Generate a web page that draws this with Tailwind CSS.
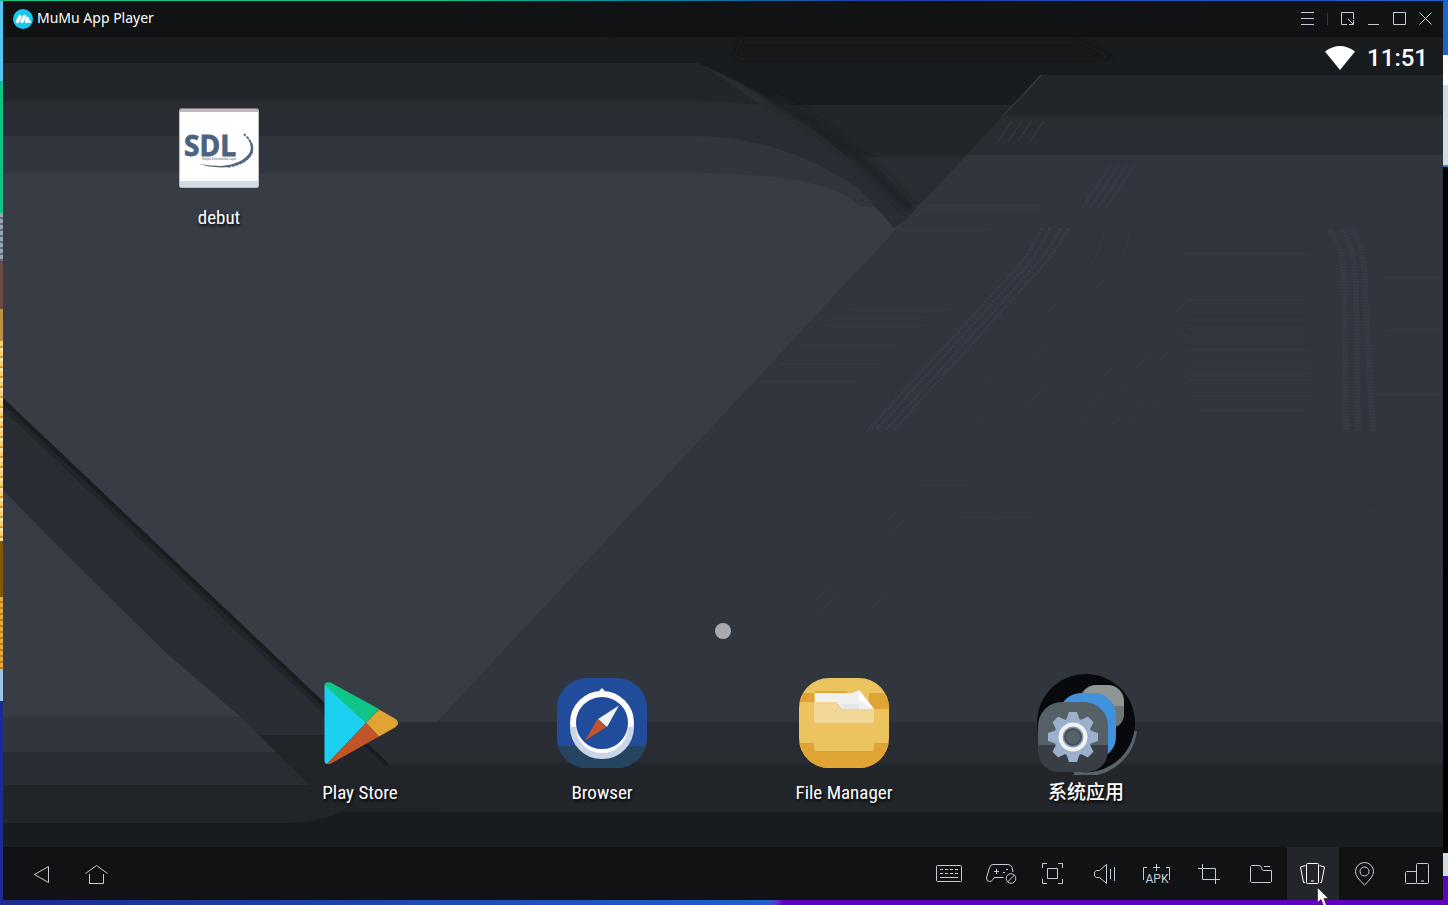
<!DOCTYPE html>
<html lang="en">
<head>
    <meta charset="UTF-8">
    <meta name="viewport" content="width=device-width, initial-scale=1.0">
    <title>MuMu App Player</title>
    <script src="https://cdn.jsdelivr.net/npm/@tailwindcss/browser@4"></script>
</head>
<body class="h-screen overflow-hidden grid grid-cols-[3px_1fr_5px] grid-rows-[1px_1fr_5px] bg-[#1d2a92] font-['Roboto_Condensed','Roboto','Noto_Sans_CJK_SC',sans-serif]">
    <!-- Desktop visible around the window -->
    <div class="col-span-3 bg-linear-to-r from-[#10c488] from-30% via-[#1f3fa8] via-60% to-[#1c62d0]"></div>
    <div class="flex flex-col">
        <div class="h-20 bg-[#56c4ee]"></div>
        <div class="h-33 bg-[#10c488]"></div>
        <div class="h-12 bg-[repeating-linear-gradient(#9aa4ae_0_4px,#5d6c78_4px_6px)]"></div>
        <div class="h-12 bg-[#6b4a44]"></div>
        <div class="h-8 bg-[#c09040]"></div>
        <div class="h-50 bg-[repeating-linear-gradient(#f3cf79_0_5px,#d99a2c_5px_7px,#fbe3a4_7px_10px)]"></div>
        <div class="h-14 bg-[#855800]"></div>
        <div class="h-18 bg-[repeating-linear-gradient(#e8a83c_0_4px,#b97b1c_4px_6px)]"></div>
        <div class="h-8 bg-[#9cc4e0]"></div>
        <div class="flex-1 bg-[#1d2a92]"></div>
    </div>

    <div class="flex flex-col min-w-0">
        <!-- Title bar -->
        <header class="h-9 bg-[#101214] text-[#c5cbd6] flex items-center pl-[10px] pr-[5px]">
            <svg class="size-5" viewBox="0 0 20 20">
                <circle cx="10" cy="10" r="10" fill="#18c8ea"/>
                <path d="M4.500 12.500 7 7.500M9 12.500l2.500-5M13.500 12.500l1-3" stroke="#fff" stroke-width="3.400" stroke-linecap="round"/>
                <circle cx="16.500" cy="12.500" r="1.500" fill="#fff"/>
            </svg>
            <h1 class="ml-1 pb-0.5 text-sm text-white font-['Noto_Sans',sans-serif]">MuMu App Player</h1>
            <div class="ml-auto flex items-center">
                <button class="w-[26px] h-9 flex items-center justify-center" aria-label="Menu">
                    <svg class="size-4" viewBox="0 0 16 16" fill="none" stroke="currentColor"><path d="M2 1.500h13M2 7.500h13M2 13.500h13"/></svg>
                </button>
                <span class="w-[14px] flex justify-center"><span class="w-px h-3 bg-[#3a3d42]"></span></span>
                <button class="w-[26px] h-9 flex items-center justify-center" aria-label="Mini mode">
                    <svg class="size-4" viewBox="0 0 16 16" fill="none" stroke="currentColor"><path d="M8 13.500H2.500v-12h12V8M9 8l5.500 5.500M10 13.500h4.500V9"/></svg>
                </button>
                <button class="w-[26px] h-9 flex items-center justify-center" aria-label="Minimize">
                    <svg class="size-4" viewBox="0 0 16 16" fill="none" stroke="currentColor"><path d="M3 13.500h11"/></svg>
                </button>
                <button class="w-[26px] h-9 flex items-center justify-center" aria-label="Maximize">
                    <svg class="size-4" viewBox="0 0 16 16" fill="none" stroke="currentColor"><path d="M2.500 1.500h12v12h-12z"/></svg>
                </button>
                <button class="w-[26px] h-9 flex items-center justify-center" aria-label="Close">
                    <svg class="size-4" viewBox="0 0 16 16" fill="none" stroke="currentColor"><path d="m2.500 1.500 12 12M14.500 1.500l-12 12"/></svg>
                </button>
            </div>
        </header>

        <!-- Android home screen -->
        <main class="relative isolate flex-1 min-h-0 flex flex-col text-white">
            <svg class="absolute inset-0 -z-10 size-full" viewBox="3 37 1440 810" preserveAspectRatio="none" aria-hidden="true">
                <defs>
                    <clipPath id="wedge"><path d="M600 37h560v40l-120-2-130 141C868 178 805 104 690 60z"/></clipPath>
                    <clipPath id="panel"><path d="M1443 37v686H436L890 236 1085 30z"/></clipPath>
                    <clipPath id="stripe"><path d="M3 398 390 765 480 847H370L300 775 235 712 165 652 60 548 3 490z"/></clipPath>
                    <filter id="soft" x="-20%" y="-20%" width="140%" height="140%"><feGaussianBlur stdDeviation="3"/></filter>
                </defs>
                <path fill="#383c44" d="M3 37h1440v810H3z"/>
                <path fill="#31353e" d="M3 37h1000v170H860q-30-34-170-34H3z"/>
                <path fill="#292d33" d="M3 37h1000v160H870q-80-61-180-61H3z"/>
                <path fill="#222529" d="M3 37h1000v70H780q-50-6-90-6H3z"/>
                <path fill="#181c1f" d="M3 37h1000v26H3z"/>
                <path fill="#31353e" d="M3 717h340v130H3z"/>
                <path fill="#292d33" d="M3 752h340v95H3z"/>
                <path fill="#212428" d="M3 785h340v62H3z"/>
                <!-- dark fold at the top -->
                <path d="M700 63Q825 125 910 218l-16 10Q840 165 790 125z" fill="#292d33"/>
                <g clip-path="url(#wedge)">
                    <path fill="#292d33" d="M600 37h600v200H600z"/>
                    <path fill="#222529" d="M600 37h600v120H600z"/>
                    <path fill="#181c1f" d="M600 37h600v68H600z"/>
                </g>
                <path d="M770 98Q850 140 910 210" fill="none" stroke="#1f2226" stroke-width="9" filter="url(#soft)"/>
                <!-- right panel -->
                <g clip-path="url(#panel)">
                    <path fill="#31353e" d="M300 155h1143v570H300z"/>
                    <path fill="#292d33" d="M900 115h543v40H900z"/>
                    <path fill="#222529" d="M900 75h543v40H900z"/>
                    <path fill="#181c1f" d="M900 37h543v38H900z"/>
                </g>
                <path fill="#292d33" d="M330 722h1113v125H330z"/>
                <path fill="#222529" d="M330 763h1113v84H330z"/>
                <path fill="#121517" opacity=".8" d="M742 39h330l40 19H735z" filter="url(#soft)"/>
                <!-- left stripe -->
                <g clip-path="url(#stripe)">
                    <path fill="#292d33" d="M3 380h500v467H3z"/>
                    <path fill="#212428" d="M3 735h500v112H3z"/>
                    <path d="M3 400 390 767" stroke="#222529" stroke-width="14"/>
                    <path d="M3 400 388 765" stroke="#1a1d20" stroke-width="5"/>
                </g>
                <path fill="#191c1f" d="M3 823h285q30 0 52-11h1103v35H3z"/>
                <!-- faint circuit lines -->
                <g fill="none" stroke="#383c45">
                    <path d="M1042 228Q1032 250 1015 270L868 430M1050 228Q1040 250 1023 270L876 430M1060 228Q1050 250 1031 270L886 430M1068 228Q1058 250 1039 270L894 430" stroke-width="3" stroke-dasharray="3 1"/>
                    <path d="M1330 230q15 20 14 60l2 140M1342 230q14 20 14 60l2 140M1352 230q14 20 13 60l8 140" stroke-width="6" stroke-dasharray="2 1"/>
                    <path d="m1110 166-28 42M1118 166l-28 42M1126 166l-28 42M1134 166l-28 42" stroke-dasharray="2 1" stroke-width="3"/>
                    <path d="m1012 121-14 20M1022 121l-14 20M1032 121l-14 20M1044 121l-14 20"/>
                    <path d="M1185 254h123M1187 300h120M1187 320h118M1187 329h118M1187 337h118M1187 350h122M1190 367h120M1190 373h120M1190 380h120M1190 396h120M1200 410h107"/>
                    <path d="M1104 232q-4 25-20 40L945 430M1130 232q-4 25-20 40L972 430M1185 254 1000 430M1187 302 1043 430M1187 325 1060 430M1187 337 1072 430M1190 370 1103 430M1190 380l-72 50" stroke-dasharray="3 1"/>
                    <path d="M915 206h125M915 211h125M890 229h100M850 309h100M830 317h95M825 325h100M800 347h100M780 364h100M760 382h95M1385 278h58M1385 331h58M1375 394h68"/>
                    <path d="M920 485 790 630M930 490 800 635M960 517 860 620M920 485h53M960 517h75" stroke-dasharray="3 1"/>
                    <path d="M965 490l150 160M980 490l150 160M1030 480l160 170M1060 480l160 170M1120 490l150 150M1160 490l150 150M1240 520l110 110M1280 490l163 80M1300 480l143 60" stroke-dasharray="2 2"/>
                </g>
            </svg>

            <div class="h-[42px] flex items-center justify-end gap-3 pr-[15px]">
                <svg class="w-[30px] h-6" viewBox="0 0 30 24" role="img" aria-label="Wi-Fi"><path d="M0 5.500Q15-5.500 30 5.500L15 24z" fill="#fff"/></svg>
                <time class="text-2xl font-medium font-['Roboto',sans-serif]">11:51</time>
            </div>

            <div class="flex-1 grid grid-cols-4 px-12 pt-[29px] content-start">
                <a href="#" class="flex flex-col items-center gap-4">
                    <svg class="size-20" viewBox="0 0 80 80">
                        <rect width="80" height="80" rx="3" fill="#8f7a7c"/>
                        <rect y="1" width="80" height="79" rx="3" fill="#b9bcc2"/>
                        <path d="M1 4h78v75H1z" fill="#fff"/>
                        <path d="M1 73h78v6H1z" fill="#d3dce4"/>
                        <text x="5" y="48" font-family="Open Sans" font-size="28" font-weight="700" fill="#4a637f" stroke="#4a637f" stroke-width=".8">SDL</text>
                        <text x="23" y="52" font-family="Liberation Sans" font-size="3" fill="#4a637f">Simple Directmedia Layer</text>
                        <path d="M65 26Q76 34 74 44 68 59 42 59.500 29 59 20 56 32 58 42 58 64 56 71 44 74 35 65 26z" fill="#56687c"/>
                        <path d="M65 26q10 9 8 18-5 12-25 15" fill="none" stroke="#56687c" stroke-width="2" stroke-dasharray="2 2"/>
                    </svg>
                    <span class="text-[19px] leading-7 [text-shadow:1px_2px_3px_#000]">debut</span>
                </a>
            </div>

            <span class="size-4 rounded-full bg-[#a9aaae] mx-auto mb-8"></span>

            <nav class="w-full max-w-[968px] mx-auto grid grid-cols-4 pb-10 text-[19px] leading-7 [text-shadow:1px_2px_3px_#000]" aria-label="Dock">
                <a href="#" class="flex flex-col items-center gap-1">
                    <svg class="size-26" viewBox="0 0 104 104">
                        <path d="M16.500 15q0-5 6-3.500L71 38 58 52z" fill="#0fc688"/>
                        <path d="M16.500 14 58 52 19 93q-2.500 0-2.500-4z" fill="#1bd0f0"/>
                        <path d="M71 38.500 86 47q8 5 0 10L71 65.500 58 52z" fill="#e0a434"/>
                        <path d="M58 52 71 65.500 24 92q-3 1.500-5 1z" fill="#bf5529"/>
                    </svg>
                    <span>Play Store</span>
                </a>
                <a href="#" class="flex flex-col items-center gap-1">
                    <svg class="size-26" viewBox="0 0 104 104">
                        <defs><clipPath id="browser"><rect x="7" y="7" width="90" height="90" rx="30"/></clipPath></defs>
                        <g clip-path="url(#browser)">
                            <path d="M0 0h104v104H0z" fill="#214c9b"/>
                            <path d="M0 75h104v29H0z" fill="#254460"/>
                        </g>
                        <circle cx="52" cy="52" r="29" fill="#214c9b" stroke="#fff" stroke-width="6"/>
                        <path d="M23 56a29 29 0 0 0 58 0" fill="none" stroke="#c8d6e8" stroke-width="6"/>
                        <path d="m49 20 3-3 3 3z" fill="#fff"/>
                        <path d="M69 34.500 57 56l-9-8z" fill="#f2f2f2"/>
                        <path d="M35 69.500 47.500 48l9 8z" fill="#bf5529"/>
                    </svg>
                    <span>Browser</span>
                </a>
                <a href="#" class="flex flex-col items-center gap-1">
                    <svg class="size-26" viewBox="0 0 104 104">
                        <defs><clipPath id="files"><rect x="7" y="7" width="90" height="90" rx="30"/></clipPath></defs>
                        <g clip-path="url(#files)">
                            <path d="M0 0h104v104H0z" fill="#ebc35f"/>
                            <path d="M0 22h22v9H0zM78 22h26v16H82q-8-8-4-16zM0 72h22v5q0 3 3 3h54q3 0 3-3v-5h22v32H0z" fill="#e0a434"/>
                        </g>
                        <path d="M23 20h32v2H23z" fill="#e0a434"/>
                        <path d="M23 22h37l7-3 15 19H50l-6-7H23z" fill="#f0f0ee"/>
                        <path d="M49 33h18v5H51z" fill="#e4e6e8"/>
                        <path d="M67 19v10l15 9z" fill="#fff"/>
                        <path d="M22 31h22l3 5q1 2 4 2h31v12q0 2-2 2H24q-2 0-2-2z" fill="#f0d795"/>
                    </svg>
                    <span>File Manager</span>
                </a>
                <a href="#" class="flex flex-col items-center gap-1">
                    <svg class="size-26" viewBox="0 0 104 104">
                        <path d="M101 60A50 50 0 0 1 40 102" fill="none" stroke="#59616a" stroke-width="4"/>
                        <circle cx="52" cy="52" r="49" fill="#08090c"/>
                        <rect x="46" y="14" width="44" height="43" rx="16" fill="#8f9593"/>
                        <path d="M46 35h44v7q0 15-16 15H46z" fill="#6c7778"/>
                        <rect x="25" y="22" width="57" height="66" rx="22" fill="#4291dc"/>
                        <rect x="4" y="31" width="70" height="70" rx="24" fill="#556067"/>
                        <path d="M4 74h70v3q0 24-24 24H28Q4 101 4 77z" fill="#393d45"/>
                        <g transform="translate(39 66)">
                            <g fill="#9bb0cd">
                                <circle r="19"/>
                                <path d="M-7-16-4-25h8l3 9z"/>
                                <path d="M-7-16-4-25h8l3 9z" transform="rotate(45)"/>
                                <path d="M-7-16-4-25h8l3 9z" transform="rotate(90)"/>
                                <path d="M-7-16-4-25h8l3 9z" transform="rotate(135)"/>
                                <path d="M-7-16-4-25h8l3 9z" transform="rotate(180)"/>
                                <path d="M-7-16-4-25h8l3 9z" transform="rotate(225)"/>
                                <path d="M-7-16-4-25h8l3 9z" transform="rotate(270)"/>
                                <path d="M-7-16-4-25h8l3 9z" transform="rotate(315)"/>
                            </g>
                            <circle r="12.500" fill="#8699b2" stroke="#f2f2f0" stroke-width="4"/>
                            <circle r="8" fill="#556067" stroke="#414c5a" stroke-width="2"/>
                        </g>
                    </svg>
                    <span lang="zh" class="font-medium">系统应用</span>
                </a>
            </nav>
        </main>

        <!-- Toolbar -->
        <footer class="h-[53px] bg-[#101214] text-[#c5cbd6] flex pl-[11px]">
            <button class="w-[55px] flex items-center justify-center" aria-label="Back">
                <svg class="size-[33px]" viewBox="0 0 33 33" fill="none" stroke="currentColor"><path d="M9.500 17.500 23.500 9.500v16z"/></svg>
            </button>
            <button class="w-[55px] flex items-center justify-center" aria-label="Home">
                <svg class="size-[33px]" viewBox="0 0 33 33" fill="none" stroke="currentColor"><path d="m5.500 16.500 11-8 11 8M9.500 17v9.500h14V17"/></svg>
            </button>
            <div class="ml-auto flex">
                <button class="w-[52px] flex items-center justify-center" aria-label="Keyboard">
                    <svg class="w-8 h-[33px]" viewBox="0 0 32 33" fill="none" stroke="currentColor"><rect x="3.500" y="8.500" width="25" height="16" rx="1"/><path d="M7 12.500h18M7 16.500h18" stroke-dasharray="3 2"/><path d="M7 20.500h18"/></svg>
                </button>
                <button class="w-[52px] flex items-center justify-center" aria-label="Gamepad">
                    <svg class="w-8 h-[33px]" viewBox="0 0 32 33" fill="none" stroke="currentColor"><path d="M28 15l-1-4.500Q26 7.500 23 7.500H8q-2.500 0-3.500 3L1.500 21q0 3.500 3 3.500 2 0 3.500-2l1.500-2h9M11.500 12v5M9 14.500h5"/><circle cx="26" cy="21.500" r="4.800"/><path d="m22.500 25 7-7"/><path d="M18 15.500h2M21 12.500h2"/></svg>
                </button>
                <button class="w-[52px] flex items-center justify-center" aria-label="Full screen">
                    <svg class="w-8 h-[33px]" viewBox="0 0 32 33" fill="none" stroke="currentColor"><path d="M5.500 11V6.500H10M21 6.500h4.500V11M25.500 22v4.500H21M10 26.500H5.500V22M10.500 11.500h10v10h-10z"/></svg>
                </button>
                <button class="w-[52px] flex items-center justify-center" aria-label="Volume">
                    <svg class="w-8 h-[33px]" viewBox="0 0 32 33" fill="none" stroke="currentColor"><path d="M17.500 7.500v19l-7-6h-3l-2-1.500v-4l2-1.500h3zM21.500 12v10M25.500 10v14"/></svg>
                </button>
                <button class="w-[52px] flex items-center justify-center" aria-label="Install APK">
                    <svg class="w-8 h-[33px]" viewBox="0 0 32 33" fill="none" stroke="currentColor"><path d="M6 10.500H2.500V23M25 10.500h3.500V23M15.500 7v7M12 10.500h7"/><text x="16" y="26" font-family="Roboto" font-size="12" text-anchor="middle" fill="currentColor" stroke="none">APK</text></svg>
                </button>
                <button class="w-[52px] flex items-center justify-center" aria-label="Screenshot">
                    <svg class="w-8 h-[33px]" viewBox="0 0 32 33" fill="none" stroke="currentColor"><path d="M9.500 7v15.500H27M5 11.500h17.500V27"/></svg>
                </button>
                <button class="w-[52px] flex items-center justify-center" aria-label="Shared folder">
                    <svg class="w-8 h-[33px]" viewBox="0 0 32 33" fill="none" stroke="currentColor"><path d="M14.500 8.500h-8l-1 1v15l1 1h19l1-1v-11h-8q-1.500 0-2-2.500t-2-2.500zM19 9.500h6"/></svg>
                </button>
                <button class="relative w-[52px] bg-[#222529] text-white flex items-center justify-center" aria-label="Shake">
                    <svg class="w-8 h-[33px]" viewBox="0 0 32 33" fill="none" stroke="currentColor"><rect x="9.500" y="6.500" width="12" height="20" rx="1"/><path d="M14 24h3M8.500 8.500l-5 1.500 3 15.500h1.500M22.500 8.500l5 1.500-3 15.500H23"/></svg>
                    <svg class="absolute left-[30px] top-10 w-3 h-[18px]" viewBox="0 0 12 18" aria-hidden="true"><path d="M.5.500v15l3.500-3 2.500 6h3l-2.500-7h4.500z" fill="#fff" stroke="#101214" stroke-width=".6"/></svg>
                </button>
                <button class="w-[52px] flex items-center justify-center" aria-label="Location">
                    <svg class="w-8 h-[33px]" viewBox="0 0 32 33" fill="none" stroke="currentColor"><path d="M15.500 28Q6.500 20 6.500 14.500a9 9 0 0 1 18 0Q24.500 20 15.500 28z"/><circle cx="15.500" cy="14.500" r="4.500"/></svg>
                </button>
                <button class="w-[52px] flex items-center justify-center" aria-label="Multi-instance">
                    <svg class="w-8 h-[33px]" viewBox="0 0 32 33" fill="none" stroke="currentColor"><rect x="15.500" y="6.500" width="12" height="20" rx="1"/><path d="M20 24h3M15.500 14.500h-10l-1 1v10l1 1h10"/></svg>
                </button>
            </div>
        </footer>
    </div>

    <div class="flex flex-col">
        <div class="h-[54px] bg-[#1c62d0]"></div>
        <div class="h-[30px] bg-white"></div>
        <div class="h-20 bg-[#d3dce4]"></div>
        <div class="h-0.5 bg-[#0a9ad8]"></div>
        <div class="flex-1 bg-black"></div>
        <div class="h-[23px] bg-[#d3dce4]"></div>
        <div class="h-6 bg-[#6400c0]"></div>
    </div>
    <div class="col-span-3 bg-linear-to-r from-[#1d2a92] via-[#1c62d0] via-53% to-[#6400c0] to-54%"></div>
</body>
</html>
